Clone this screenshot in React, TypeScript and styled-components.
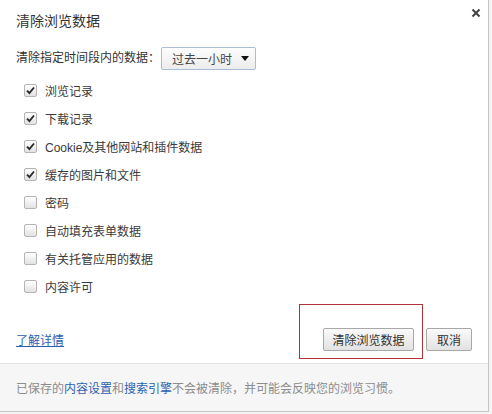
import React from "react";
import styled, { createGlobalStyle } from "styled-components";

const Global = createGlobalStyle`
  html, body { margin: 0; padding: 0; background: #f4f4f4; }
  body { font-family: "Liberation Sans", "Noto Sans CJK SC", sans-serif; }
`;

const Dialog = styled.div`
  position: relative;
  width: 488px;
  height: 411px;
  background: #ffffff;
  border-right: 1px solid #c4c4c4;
  border-bottom: 1px solid #c4c4c4;
  display: flex;
  flex-direction: column;
  color: #333;
  font-size: 12px;
`;

const Body = styled.div`
  flex: 1;
  padding: 0 16px 0 16px;
  display: flex;
  flex-direction: column;
`;

const Header = styled.div`
  display: flex;
  justify-content: space-between;
  align-items: center;
  padding-top: 11px;
  height: 20px;
`;

const Title = styled.div`
  font-size: 14px;
  line-height: 20px;
  color: #333;
`;

const CloseBtn = styled.div`
  width: 10px;
  height: 10px;
  margin-top: -16px;
  margin-right: -9px;
  display: flex;
`;

const RangeRow = styled.div`
  display: flex;
  align-items: center;
  margin-top: 16px;
  height: 23px;
`;

const RangeLabel = styled.span`
  font-size: 12px;
  line-height: 23px;
  margin-right: 1px;
`;

const Select = styled.div`
  height: 21px;
  border: 1px solid #a9bcd8;
  border-radius: 2px;
  background: linear-gradient(#fdfdfd, #ececec);
  display: flex;
  align-items: center;
  justify-content: space-between;
  padding: 0 6px 0 10px;
  box-sizing: content-box;
  width: 77px;
  font-size: 12px;
  color: #444;
`;

const Arrow = styled.span`
  width: 0;
  height: 0;
  border-left: 4px solid transparent;
  border-right: 4px solid transparent;
  border-top: 5px solid #111;
`;

const List = styled.div`
  margin-top: 6px;
  display: flex;
  flex-direction: column;
`;

const Row = styled.label`
  height: 28px;
  display: flex;
  align-items: center;
  padding-left: 8px;
  font-size: 12px;
  color: #3a3a3a;
`;

const Box = styled.span`
  width: 11px;
  height: 11px;
  border: 1px solid #b4b4b4;
  border-radius: 2px;
  background: linear-gradient(#ffffff, #e2e2e2);
  margin-right: 8px;
  display: flex;
  align-items: center;
  justify-content: center;
`;

const Actions = styled.div`
  margin-top: 28px;
  height: 22px;
  display: flex;
  align-items: center;
`;

const LearnMore = styled.a`
  color: #2d5fb3;
  text-decoration: underline;
  font-size: 12px;
  margin-right: auto;
`;

const Button = styled.button<{ $w: number }>`
  width: ${(p) => p.$w}px;
  height: 23px;
  margin-left: 12px;
  border: 1px solid #a8a8a8;
  border-radius: 2px;
  background: linear-gradient(#fafafa, #e2e2e2);
  font-family: "Liberation Sans", "Noto Sans CJK SC", sans-serif;
  font-size: 12px;
  color: #333;
  padding: 0;
`;

const Footer = styled.div`
  margin-top: 13px;
  height: 48px;
  border-top: 1px solid #e3e3e3;
  background: #f6f6f6;
  display: flex;
  align-items: center;
  padding: 0 16px;
  font-size: 12px;
  color: #8c8c8c;
  box-sizing: border-box;
`;

const FooterLink = styled.span`
  color: #2d5fb3;
`;

const Highlight = styled.div`
  position: absolute;
  left: 299px;
  top: 304px;
  width: 122px;
  height: 53px;
  border: 1px solid #b3333a;
`;

const Check = () => (
  <svg width="9" height="9" viewBox="0 0 9 9">
    <path d="M1 4.6 L3.4 7 L8 1.5" fill="none" stroke="#2b2b2b" strokeWidth="1.9" />
  </svg>
);

const items: [string, boolean][] = [
  ["浏览记录", true],
  ["下载记录", true],
  ["Cookie及其他网站和插件数据", true],
  ["缓存的图片和文件", true],
  ["密码", false],
  ["自动填充表单数据", false],
  ["有关托管应用的数据", false],
  ["内容许可", false],
];

export default function App() {
  return (
    <>
      <Global />
      <Dialog>
        <Body>
          <Header>
            <Title>清除浏览数据</Title>
            <CloseBtn>
              <svg width="10" height="10" viewBox="0 0 10 10">
                <path d="M1.5 1.5 L8.5 8.5 M8.5 1.5 L1.5 8.5" stroke="#444" strokeWidth="2" />
              </svg>
            </CloseBtn>
          </Header>
          <RangeRow>
            <RangeLabel>清除指定时间段内的数据：</RangeLabel>
            <Select>
              <span>过去一小时</span>
              <Arrow />
            </Select>
          </RangeRow>
          <List>
            {items.map(([t, c]) => (
              <Row key={t}>
                <Box>{c && <Check />}</Box>
                {t}
              </Row>
            ))}
          </List>
          <Actions>
            <LearnMore>了解详情</LearnMore>
            <Button $w={91}>清除浏览数据</Button>
            <Button $w={46}>取消</Button>
          </Actions>
        </Body>
        <Footer>
          已保存的<FooterLink>内容设置</FooterLink>和<FooterLink>搜索引擎</FooterLink>不会被清除，并可能会反映您的浏览习惯。
        </Footer>
        <Highlight />
      </Dialog>
    </>
  );
}
